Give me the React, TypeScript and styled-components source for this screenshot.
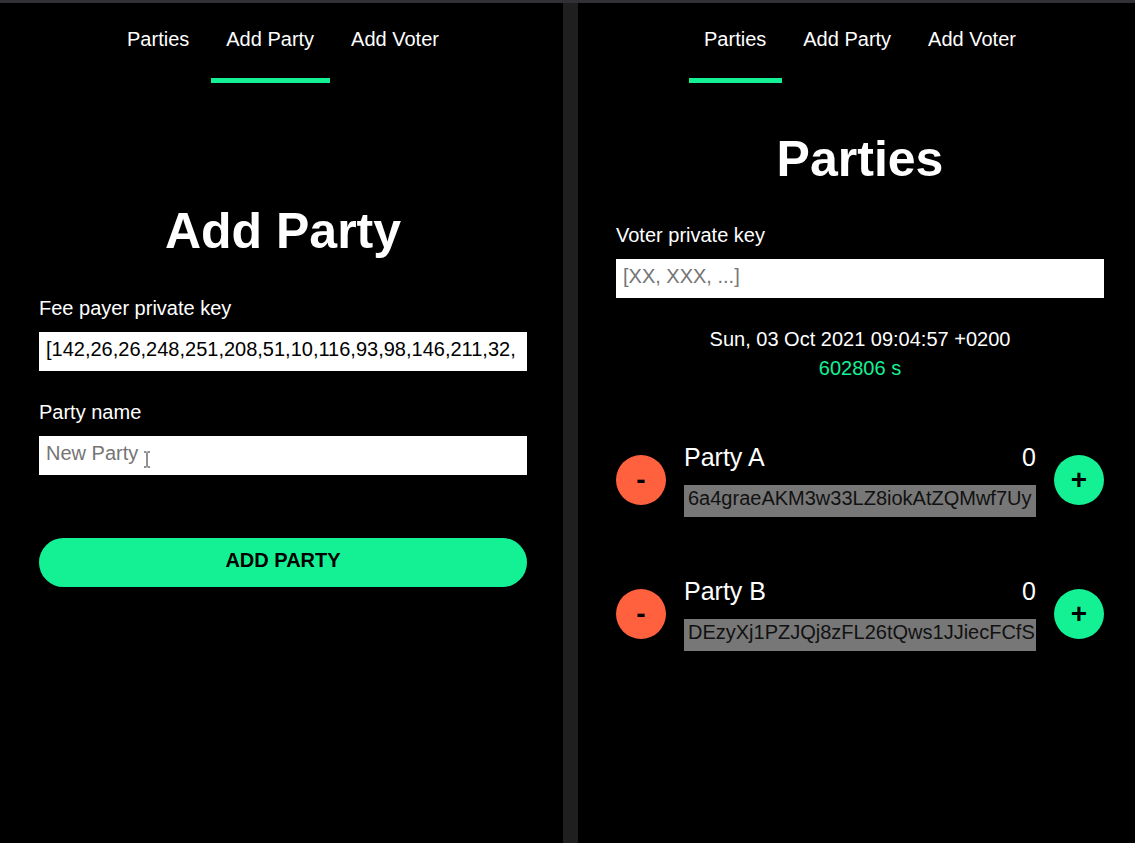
import React from 'react'
import styled, { createGlobalStyle } from 'styled-components'

const green = '#14f195'
const orange = '#ff613f'

const GlobalStyle = createGlobalStyle`
  html, body {
    margin: 0;
    padding: 0;
    background: #000;
  }
  body {
    font-family: "Liberation Sans", Arial, sans-serif;
    color: #fff;
  }
`

const parties = [
  { name: 'Party A', votes: 0, key: '6a4graeAKM3w33LZ8iokAtZQMwf7Uy' },
  { name: 'Party B', votes: 0, key: 'DEzyXj1PZJQj8zFL26tQws1JJiecFCfS' },
]

const tabs = ['Parties', 'Add Party', 'Add Voter']

const NavBar: React.FC<{ active: string }> = ({ active }) => (
  <StyledNav>
    {tabs.map(t => (
      <StyledTab key={t} $active={t === active}>{t}</StyledTab>
    ))}
  </StyledNav>
)

const App: React.FC = () => {
  return (
    <>
      <GlobalStyle />
      <StyledPage>
        <StyledPanel $inset={39}>
          <StyledColumn>
            <NavBar active="Add Party" />
            <StyledHeading $top={119}>Add Party</StyledHeading>
            <StyledLabel $gap={37}>Fee payer private key</StyledLabel>
            <StyledInput
              readOnly
              value="[142,26,26,248,251,208,51,10,116,93,98,146,211,32,"
            />
            <StyledLabel $gap={30}>Party name</StyledLabel>
            <StyledField>
              <StyledInput placeholder="New Party" />
              <StyledCursor width="8" height="17" viewBox="0 0 8 17">
                <path d="M1 1h2.5M4.5 1H7M4 1.5v14M1 16h2.5M4.5 16H7" stroke="#222" strokeWidth="1" fill="none" />
              </StyledCursor>
            </StyledField>
            <StyledButton>Add Party</StyledButton>
          </StyledColumn>
        </StyledPanel>

        <StyledDivider />

        <StyledPanel $inset={38}>
          <StyledColumn>
            <NavBar active="Parties" />
            <StyledHeading $top={47}>Parties</StyledHeading>
            <StyledLabel $gap={36}>Voter private key</StyledLabel>
            <StyledInput placeholder="[XX, XXX, ...]" />
            <StyledDate>Sun, 03 Oct 2021 09:04:57 +0200</StyledDate>
            <StyledCountdown>602806 s</StyledCountdown>

            <StyledPartyList>
              {parties.map(p => (
                <StyledPartyRow key={p.name}>
                  <StyledVoteButton $tone={orange}>-</StyledVoteButton>
                  <StyledPartyBody>
                    <StyledPartyHead>
                      <span>{p.name}</span>
                      <span>{p.votes}</span>
                    </StyledPartyHead>
                    <StyledPartyKey>{p.key}</StyledPartyKey>
                  </StyledPartyBody>
                  <StyledVoteButton $tone={green}>+</StyledVoteButton>
                </StyledPartyRow>
              ))}
            </StyledPartyList>
          </StyledColumn>
        </StyledPanel>
      </StyledPage>
    </>
  )
}

const StyledPage = styled.div`
  display: grid;
  grid-template-columns: 563px 15px 1fr;
  min-height: 843px;
  box-sizing: border-box;
  border-top: 3px solid #303035;
`

const StyledPanel = styled.div<{ $inset: number }>`
  background: #000;
  padding-left: ${props => props.$inset}px;
`

const StyledDivider = styled.div`
  background: #1f1f1f;
`

const StyledColumn = styled.div`
  width: 488px;
  display: flex;
  flex-direction: column;
`

const StyledNav = styled.nav`
  display: flex;
  justify-content: center;
  gap: 6px;
`

const StyledTab = styled.div<{ $active: boolean }>`
  padding: 25px 15.5px 27px;
  font-size: 20px;
  line-height: 23px;
  color: #fff;
  border-bottom: 5px solid ${props => (props.$active ? green : 'transparent')};
`

const StyledHeading = styled.h1<{ $top: number }>`
  margin: ${props => props.$top}px 0 0;
  font-size: 50px;
  line-height: 58px;
  font-weight: 700;
  text-align: center;
`

const StyledLabel = styled.label<{ $gap: number }>`
  display: block;
  margin-top: ${props => props.$gap}px;
  margin-bottom: 12px;
  font-size: 20px;
  line-height: 23px;
`

const StyledField = styled.div`
  position: relative;
`

const StyledCursor = styled.svg`
  position: absolute;
  left: 104px;
  top: 15px;
`

const StyledInput = styled.input`
  display: block;
  width: 100%;
  height: 39px;
  box-sizing: border-box;
  padding: 0 7px 5px;
  border: none;
  outline: none;
  background: #fff;
  color: #000;
  font-family: "Liberation Sans", Arial, sans-serif;
  font-size: 20px;

  &::placeholder {
    color: #757575;
  }
`

const StyledButton = styled.button`
  margin-top: 63px;
  height: 49px;
  padding: 0 0 4px;
  border: none;
  border-radius: 25px;
  background: ${green};
  color: #000;
  font-family: "Liberation Sans", Arial, sans-serif;
  font-size: 20px;
  font-weight: 700;
  text-transform: uppercase;
`

const StyledDate = styled.div`
  margin-top: 30px;
  text-align: center;
  font-size: 20px;
  line-height: 23px;
`

const StyledCountdown = styled.div`
  margin-top: 6px;
  text-align: center;
  font-size: 20px;
  line-height: 23px;
  color: ${green};
`

const StyledPartyList = styled.div`
  margin-top: 63px;
  display: flex;
  flex-direction: column;
  gap: 60px;
`

const StyledPartyRow = styled.div`
  display: flex;
  align-items: center;
  gap: 18px;
`

const StyledVoteButton = styled.button<{ $tone: string }>`
  flex: none;
  width: 50px;
  height: 50px;
  padding: 0;
  border: none;
  border-radius: 50%;
  background: ${props => props.$tone};
  color: #000;
  font-family: "Liberation Sans", Arial, sans-serif;
  font-size: 28px;
  font-weight: 700;
  line-height: 50px;
`

const StyledPartyBody = styled.div`
  flex: 1;
  min-width: 0;
`

const StyledPartyHead = styled.div`
  display: flex;
  justify-content: space-between;
  font-size: 25px;
  line-height: 29px;
`

const StyledPartyKey = styled.div`
  margin-top: 13px;
  padding: 2px 4px 7px;
  background: #777;
  color: #111;
  font-size: 20px;
  line-height: 23px;
  white-space: nowrap;
  overflow: hidden;
`

export default App
